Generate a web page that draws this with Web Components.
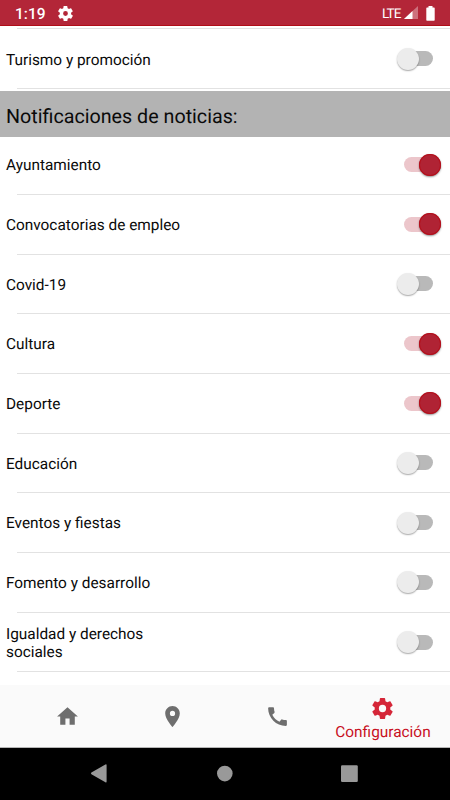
<!DOCTYPE html>
<html lang="es">
<head>
<meta charset="utf-8">
<title>Configuración</title>
<style>
    body {
        margin: 0;
        background: #fff;
        font-family: Roboto, "Liberation Sans", sans-serif;
        text-rendering: geometricPrecision;
    }
</style>
</head>
<body>
<settings-screen></settings-screen>

<script>
class StatusBar extends HTMLElement {
    constructor() {
        super();
        this.attachShadow({ mode: 'open' });
        this.shadowRoot.innerHTML = `
            <style>
                :host {
                    display: flex;
                    align-items: center;
                    box-sizing: border-box;
                    height: 26px;
                    padding: 1px 15px 0 15px;
                    background: #b32638;
                    border-bottom: 1px solid #b00d18;
                    color: #fff;
                    flex: none;
                }
                .time { font-size: 15.5px; font-weight: 500; width: 42.5px; line-height: 24px; padding-top: 1px; }
                .lte { font-size: 13.5px; letter-spacing: -0.9px; margin-left: auto; margin-right: 3.5px; padding-top: 1px; }
                svg { display: block; }
                .signal { margin-right: 8px; }
            </style>
            <span class="time">1:19</span>
            <svg width="15" height="15" viewBox="2 2 20 20" fill="#fff"><path d="M19.4 13a7.5 7.5 0 0 0 0-2l2.1-1.6c.2-.2.2-.4.1-.6l-2-3.5c-.1-.2-.4-.3-.6-.2l-2.5 1a7.3 7.3 0 0 0-1.7-1l-.4-2.6a.5.5 0 0 0-.5-.5h-4a.5.5 0 0 0-.5.4L9.1 5.1a7.7 7.7 0 0 0-1.7 1l-2.5-1a.5.5 0 0 0-.6.2l-2 3.5c-.1.2-.1.5.1.6L4.5 11a8 8 0 0 0 0 2l-2.1 1.6c-.2.2-.2.4-.1.6l2 3.5c.1.2.4.3.6.2l2.5-1c.5.4 1.1.7 1.7 1l.4 2.6c0 .2.2.5.5.5h4c.2 0 .5-.2.5-.4l.4-2.7a7.7 7.7 0 0 0 1.7-1l2.5 1c.2.1.5 0 .6-.2l2-3.5c.1-.2.1-.5-.1-.6zM12 15.2a3.2 3.2 0 1 1 0-6.4 3.2 3.2 0 0 1 0 6.4z"/></svg>
            <span class="lte">LTE</span>
            <svg class="signal" width="14" height="14" viewBox="0 0 14 14"><path d="M14 0v13H0z" fill="#fff" fill-opacity=".35"/><path d="M8.5 5v8H0z" fill="#fff"/></svg>
            <svg width="9" height="15" viewBox="0 0 9 15"><path d="M2.5 0h4v1.5H8a.7.7 0 0 1 .7.7V14a.7.7 0 0 1-.7.7H1a.7.7 0 0 1-.7-.7V2.2A.7.7 0 0 1 1 1.5h1.5z" fill="#fff"/></svg>
        `;
    }
}

class ToggleSwitch extends HTMLElement {
    constructor() {
        super();
        this.attachShadow({ mode: 'open' });
        this.shadowRoot.innerHTML = `
            <style>
                :host {
                    display: flex;
                    align-items: center;
                    width: 45px;
                    height: 22px;
                    flex: none;
                }
                .track {
                    display: flex;
                    align-items: center;
                    width: 29px;
                    height: 15px;
                    margin: 0 8px;
                    border-radius: 8px;
                    background: #b9b9b9;
                }
                .thumb {
                    width: 22px;
                    height: 22px;
                    margin: 0 -7.5px;
                    border-radius: 50%;
                    background: #ececec;
                    box-shadow: 0 1px 1.5px rgba(0, 0, 0, 0.35);
                    flex: none;
                }
                :host([on]) .track { background: #ecc6cb; justify-content: flex-end; }
                :host([on]) .thumb { background: #b02334; box-shadow: 0 1px 2px rgba(0, 0, 0, 0.45), inset 0 0 0 1px #b4101c; }
            </style>
            <div class="track"><div class="thumb"></div></div>
        `;
    }
}

class SettingRow extends HTMLElement {
    constructor() {
        super();
        this.attachShadow({ mode: 'open' });
        this.shadowRoot.innerHTML = `
            <style>
                :host {
                    display: flex;
                    flex-direction: column;
                    height: 57.9px;
                    flex: none;
                }
                .content {
                    display: flex;
                    align-items: center;
                    justify-content: space-between;
                    flex: 1;
                    padding: 0 9px 1.6px 6px;
                }
                .label { width: 180px; font-size: 15.38px; line-height: 18px; color: #0a0a0a; padding-top: 1.6px; }
                .divider { height: 1px; margin-left: 17px; background: #e2e2e2; }
            </style>
            <div class="content">
                <div class="label"><slot></slot></div>
                <toggle-switch></toggle-switch>
            </div>
            <div class="divider"></div>
        `;
    }

    connectedCallback() {
        this.shadowRoot.querySelector('toggle-switch').toggleAttribute('on', this.hasAttribute('on'));
    }
}

class SectionHeader extends HTMLElement {
    constructor() {
        super();
        this.attachShadow({ mode: 'open' });
        this.shadowRoot.innerHTML = `
            <style>
                :host {
                    display: flex;
                    align-items: center;
                    box-sizing: border-box;
                    height: 46px;
                    padding: 5px 6px 0;
                    background: #b3b3b3;
                    color: #0a0a0a;
                    font-size: 19.7px;
                    flex: none;
                }
            </style>
            <slot></slot>
        `;
    }
}

const TAB_ICONS = {
    home: 'M10 20v-6h4v6h5v-8h3L12 3 2 12h3v8z',
    place: 'M12 2C8.13 2 5 5.13 5 9c0 5.25 7 13 7 13s7-7.75 7-13c0-3.87-3.13-7-7-7zm0 9.5a2.5 2.5 0 1 1 0-5 2.5 2.5 0 0 1 0 5z',
    call: 'M20.01 15.38c-1.23 0-2.42-.2-3.53-.56a.98.98 0 0 0-1.01.24l-1.57 1.97c-2.83-1.35-5.48-3.9-6.89-6.83l1.95-1.66c.27-.28.35-.67.24-1.02-.37-1.11-.56-2.3-.56-3.53 0-.54-.45-.99-.99-.99H4.19C3.65 3 3 3.24 3 3.99 3 13.28 10.73 21 20.01 21c.71 0 .99-.63.99-1.18v-3.45c0-.54-.45-.99-.99-.99z',
    settings: 'M19.43 12.98c.04-.32.07-.64.07-.98s-.03-.66-.07-.98l2.11-1.65c.19-.15.24-.42.12-.64l-2-3.46c-.12-.22-.39-.3-.61-.22l-2.49 1c-.52-.4-1.08-.73-1.69-.98l-.38-2.65A.49.49 0 0 0 14 2h-4c-.25 0-.46.18-.49.42l-.38 2.65c-.61.25-1.17.59-1.69.98l-2.49-1c-.23-.09-.49 0-.61.22l-2 3.46c-.13.22-.07.49.12.64l2.11 1.65c-.04.32-.07.65-.07.98s.03.66.07.98l-2.11 1.65c-.19.15-.24.42-.12.64l2 3.46c.12.22.39.3.61.22l2.49-1c.52.4 1.08.73 1.69.98l.38 2.65c.03.24.24.42.49.42h4c.25 0 .46-.18.49-.42l.38-2.65c.61-.25 1.17-.59 1.69-.98l2.49 1c.23.09.49 0 .61-.22l2-3.46c.12-.22.07-.49-.12-.64l-2.11-1.65zM12 15.5a3.5 3.5 0 1 1 0-7 3.5 3.5 0 0 1 0 7z'
};

class TabItem extends HTMLElement {
    constructor() {
        super();
        this.attachShadow({ mode: 'open' });
    }

    connectedCallback() {
        this.shadowRoot.innerHTML = `
            <style>
                :host {
                    display: flex;
                    flex-direction: column;
                    align-items: center;
                    justify-content: center;
                    flex: 1 1 0;
                    color: #6e6e6e;
                    font-size: 15.4px;
                    line-height: 20px;
                    white-space: nowrap;
                }
                :host([active]) { color: #c8101f; padding-top: 5px; }
                svg { display: block; fill: currentColor; }
                :host([active]) svg { fill: #d52638; margin-bottom: 1px; }
            </style>
            <svg width="25" height="25" viewBox="0 0 24 24"><path d="${TAB_ICONS[this.getAttribute('icon')]}"/></svg>
            <slot></slot>
        `;
    }
}

class TabBar extends HTMLElement {
    constructor() {
        super();
        this.attachShadow({ mode: 'open' });
        this.shadowRoot.innerHTML = `
            <style>
                :host {
                    display: flex;
                    box-sizing: border-box;
                    height: 63px;
                    padding: 0 14.4px 0 14.6px;
                    background: #fafafa;
                    border-bottom: 1px solid #b5b5b5;
                    flex: none;
                }
            </style>
            <slot></slot>
        `;
    }
}

class SystemNav extends HTMLElement {
    constructor() {
        super();
        this.attachShadow({ mode: 'open' });
        this.shadowRoot.innerHTML = `
            <style>
                :host {
                    display: flex;
                    justify-content: space-between;
                    align-items: center;
                    box-sizing: border-box;
                    height: 52px;
                    padding: 0 89px 0 87px;
                    background: #000;
                    flex: none;
                }
                svg { display: block; fill: #999; }
            </style>
            <svg width="24" height="24" viewBox="0 0 24 24"><path d="M4.4 10.6 18.4 2.5q1.2-.6 1.2.7v16.4q0 1.3-1.2.7L4.4 12.2q-1-.8 0-1.6z"/></svg>
            <svg width="24" height="24" viewBox="0 0 24 24"><circle cx="12.8" cy="11.6" r="7.8"/></svg>
            <svg width="24" height="24" viewBox="0 0 24 24"><rect x="4" y="3.2" width="16.8" height="16.8" rx="1.2"/></svg>
        `;
    }
}

class SettingsScreen extends HTMLElement {
    constructor() {
        super();
        this.attachShadow({ mode: 'open' });
        this.shadowRoot.innerHTML = `
            <style>
                :host {
                    display: flex;
                    flex-direction: column;
                    width: 450px;
                    height: 800px;
                    overflow: hidden;
                    background: #fff;
                }
                .list {
                    display: flex;
                    flex-direction: column;
                    flex: 1;
                    min-height: 0;
                    overflow: hidden;
                    padding-top: 2px;
                }
                .divider { height: 1px; margin: 0 0 2.3px 17px; background: #e2e2e2; flex: none; }
                section-header { margin-top: 1.8px; }
                setting-row + setting-row { margin-top: 1.79px; }
            </style>
            <status-bar></status-bar>
            <div class="list">
                <div class="divider"></div>
                <setting-row>Turismo y promoción</setting-row>
                <section-header>Notificaciones de noticias:</section-header>
                <setting-row on>Ayuntamiento</setting-row>
                <setting-row on>Convocatorias de empleo</setting-row>
                <setting-row>Covid-19</setting-row>
                <setting-row on>Cultura</setting-row>
                <setting-row on>Deporte</setting-row>
                <setting-row>Educación</setting-row>
                <setting-row>Eventos y fiestas</setting-row>
                <setting-row>Fomento y desarrollo</setting-row>
                <setting-row>Igualdad y derechos sociales</setting-row>
            </div>
            <tab-bar>
                <tab-item icon="home"></tab-item>
                <tab-item icon="place"></tab-item>
                <tab-item icon="call"></tab-item>
                <tab-item icon="settings" active>Configuración</tab-item>
            </tab-bar>
            <system-nav></system-nav>
        `;
    }
}

customElements.define('status-bar', StatusBar);
customElements.define('toggle-switch', ToggleSwitch);
customElements.define('setting-row', SettingRow);
customElements.define('section-header', SectionHeader);
customElements.define('tab-item', TabItem);
customElements.define('tab-bar', TabBar);
customElements.define('system-nav', SystemNav);
customElements.define('settings-screen', SettingsScreen);
</script>
</body>
</html>
